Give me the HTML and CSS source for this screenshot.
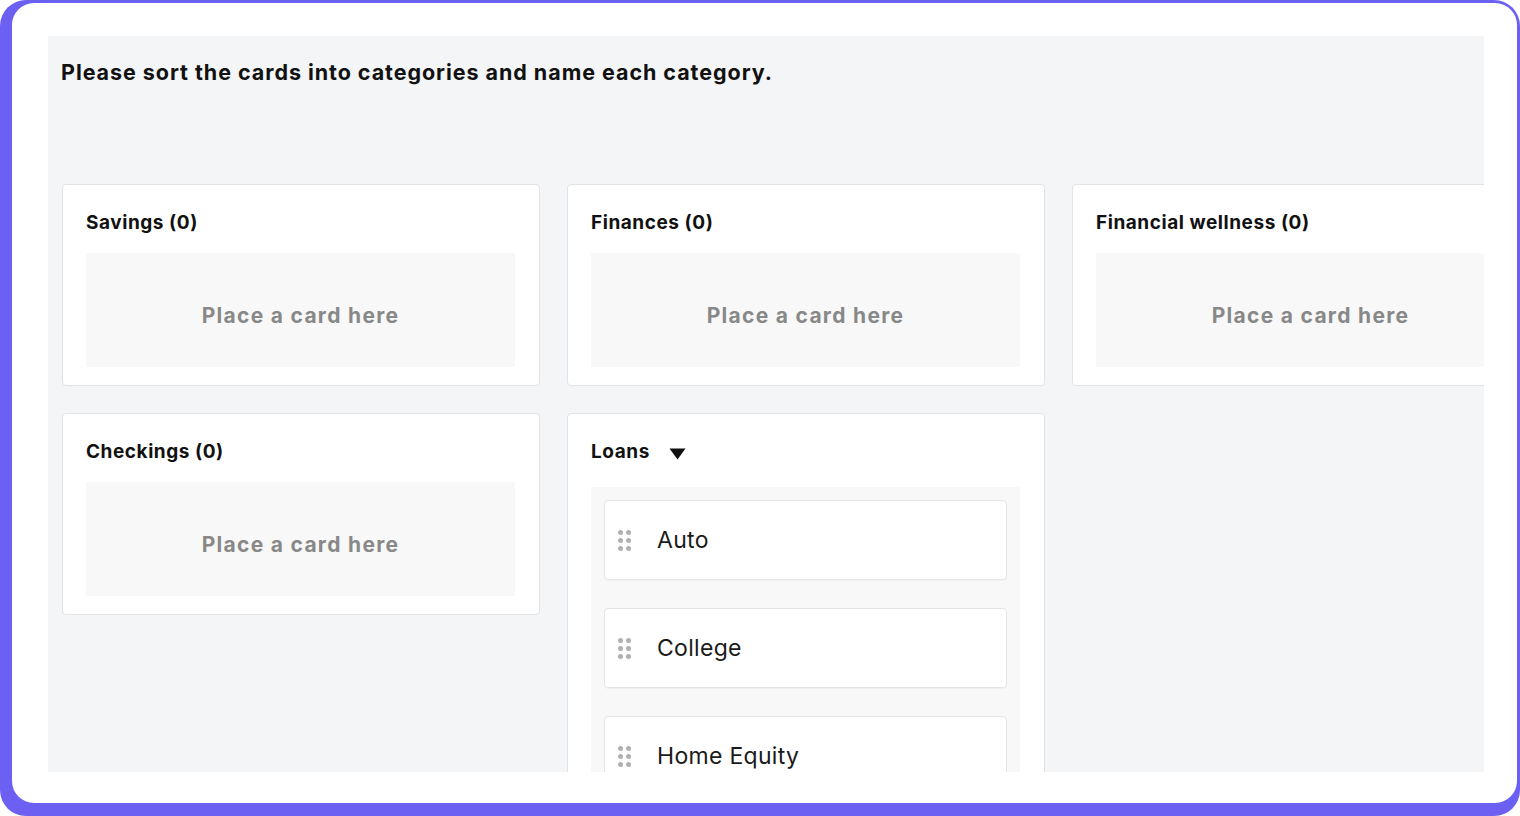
FILE: index.html
```html
<!DOCTYPE html>
<html lang="en">
<head>
<meta charset="utf-8">
<title>Card sort</title>
<link rel="stylesheet" href="styles.css">
</head>
<body>
<div class="frame">
  <div class="sheet">
    <div class="panel">
      <h1 class="prompt">Please sort the cards into categories and name each category.</h1>
      <div class="board">
        <section class="category">
          <h2 class="cat-title">Savings (0)</h2>
          <div class="dropzone"><span>Place a card here</span></div>
        </section>
        <section class="category">
          <h2 class="cat-title">Finances (0)</h2>
          <div class="dropzone"><span>Place a card here</span></div>
        </section>
        <section class="category">
          <h2 class="cat-title">Financial wellness (0)</h2>
          <div class="dropzone"><span>Place a card here</span></div>
        </section>
        <section class="category">
          <h2 class="cat-title">Checkings (0)</h2>
          <div class="dropzone"><span>Place a card here</span></div>
        </section>
        <section class="category category-open">
          <h2 class="cat-title">Loans <svg class="caret" width="17" height="12" viewBox="0 0 17 12"><path d="M0.5 0.5 H16.5 L8.5 11.5 Z" fill="#111"/></svg></h2>
          <div class="card-list">
            <div class="item"><span class="handle"><i></i><i></i><i></i><i></i><i></i><i></i></span><span class="label">Auto</span></div>
            <div class="item"><span class="handle"><i></i><i></i><i></i><i></i><i></i><i></i></span><span class="label">College</span></div>
            <div class="item"><span class="handle"><i></i><i></i><i></i><i></i><i></i><i></i></span><span class="label">Home Equity</span></div>
          </div>
        </section>
      </div>
    </div>
  </div>
</div>
</body>
</html>
```
FILE: styles.css
```css
html, body {
  margin: 0;
  padding: 0;
  background: #ffffff;
}
body {
  font-family: "Inter", "Noto Sans", sans-serif;
  color: #111;
}
.frame {
  width: 1520px;
  height: 816px;
  box-sizing: border-box;
  background: #6c60f3;
  border-radius: 26px;
  padding: 3px 3px 13px 12px;
  overflow: hidden;
}
.sheet {
  height: 100%;
  background: #fff;
  border-radius: 22px;
  box-sizing: border-box;
  padding: 33px 33px 31px 36px;
}
.panel {
  height: 100%;
  background: #f4f5f7;
  overflow: hidden;
  padding: 0 0 0 13px;
  box-sizing: border-box;
}
.prompt {
  margin: 0;
  padding-top: 23px;
  font-size: 21.5px;
  line-height: 26px;
  font-weight: 700;
  color: #111;
  letter-spacing: 0.95px;
}
.board {
  margin-top: 99px;
  padding-left: 1px;
  display: grid;
  grid-template-columns: repeat(3, 478px);
  column-gap: 27px;
  row-gap: 27px;
  align-items: start;
}
.category {
  background: #fff;
  border: 1px solid #e2e3e6;
  border-radius: 4px;
  padding: 26px 24px 18px 23px;
}
.cat-title {
  margin: 0 0 18px;
  font-size: 19px;
  line-height: 24px;
  font-weight: 700;
  letter-spacing: 0.55px;
  display: flex;
  align-items: center;
  gap: 19px;
  color: #111;
}
.caret {
  display: block;
  margin-top: 3px;
}
.category-open .cat-title {
  margin-bottom: 23px;
}
.dropzone {
  height: 114px;
  background: #f8f8f8;
  display: flex;
  align-items: center;
  justify-content: center;
  padding-top: 10px;
  box-sizing: border-box;
}
.dropzone span {
  font-size: 21px;
  font-weight: 700;
  letter-spacing: 1.3px;
  color: #888888;
}
.card-list {
  background: #f8f8f8;
  padding: 13px 13px 20px;
  display: flex;
  flex-direction: column;
  gap: 28px;
}
.item {
  height: 80px;
  box-sizing: border-box;
  background: #fff;
  border: 1px solid #e4e5e7;
  border-radius: 4px;
  box-shadow: 0 1px 1px rgba(0,0,0,0.03);
  display: flex;
  align-items: center;
  padding-left: 13px;
}
.handle {
  display: grid;
  grid-template-columns: repeat(2, 5px);
  grid-auto-rows: 5px;
  gap: 3px;
  width: 13px;
  margin-right: 26px;
  margin-top: 1px;
}
.handle i {
  display: block;
  width: 5px;
  height: 5px;
  border-radius: 50%;
  background: #b0b0b0;
}
.label {
  font-size: 23px;
  letter-spacing: 0.3px;
  color: #1a1a1a;
}
```
